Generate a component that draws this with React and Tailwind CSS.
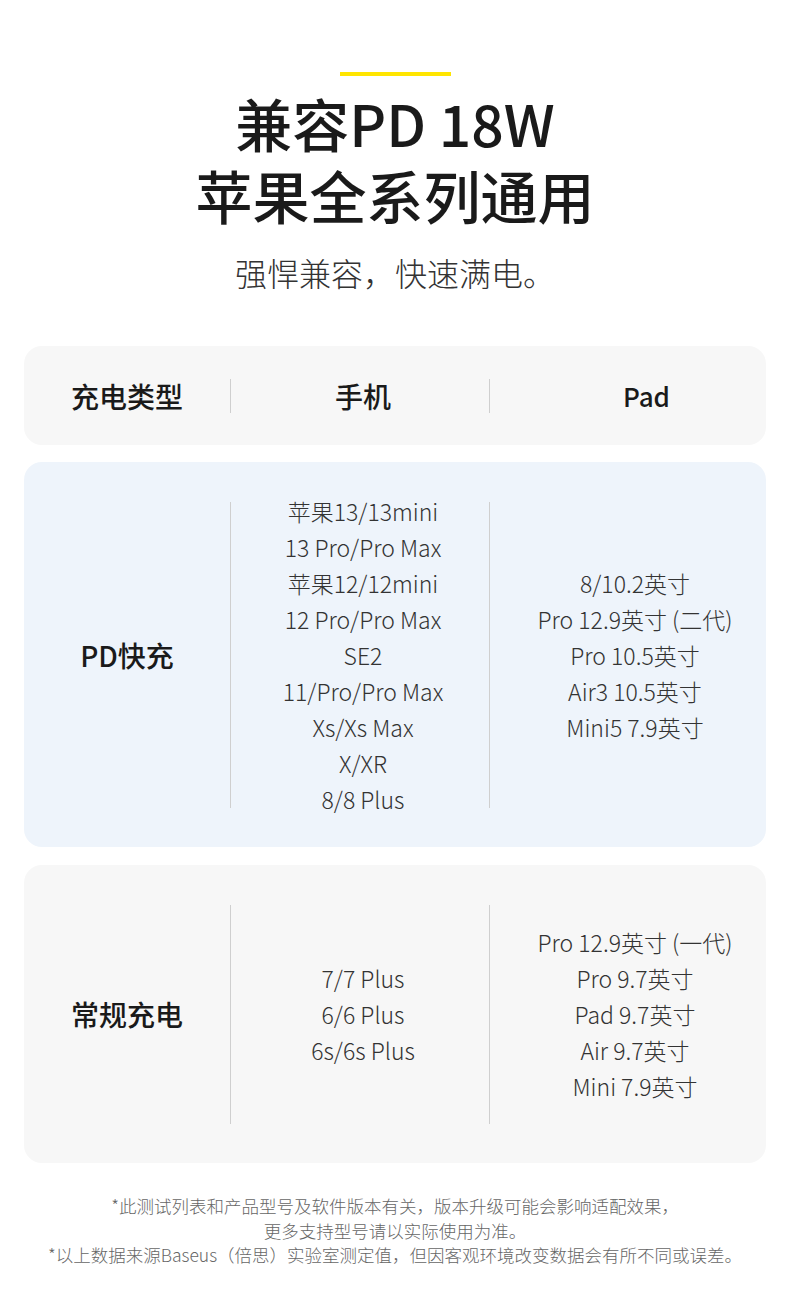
import React from 'react';

const FONT = { fontFamily: '"Noto Sans CJK SC", "Noto Sans", sans-serif' };

const pdPhones = [
  '苹果13/13mini',
  '13 Pro/Pro Max',
  '苹果12/12mini',
  '12 Pro/Pro Max',
  'SE2',
  '11/Pro/Pro Max',
  'Xs/Xs Max',
  'X/XR',
  '8/8 Plus',
];

const pdPads = ['8/10.2英寸', 'Pro 12.9英寸 (二代)', 'Pro 10.5英寸', 'Air3 10.5英寸', 'Mini5 7.9英寸'];

const normalPhones = ['7/7 Plus', '6/6 Plus', '6s/6s Plus'];

const normalPads = ['Pro 12.9英寸 (一代)', 'Pro 9.7英寸', 'Pad 9.7英寸', 'Air 9.7英寸', 'Mini 7.9英寸'];

// one column of device names, 36px per line
function ItemList({ items }) {
  return (
    <div className="flex flex-col items-center">
      {items.map((item) => (
        <div key={item} className="h-[36px] leading-[36px] text-[23px] font-light text-[#333] whitespace-nowrap">
          {item}
        </div>
      ))}
    </div>
  );
}

function Row({ label, phones, pads, bg, height, dividerHeight }) {
  return (
    <div
      className={`mx-[24px] rounded-[18px] ${bg} grid grid-cols-[206px_259px_1fr] items-center`}
      style={{ height }}
    >
      <div className="text-center text-[28px] font-medium text-[#1a1a1a]">{label}</div>
      <div className="relative flex items-center justify-center pl-[7px] h-full">
        <div
          className="absolute left-0 w-px bg-[#cfcfcf]"
          style={{ height: dividerHeight }}
        />
        <ItemList items={phones} />
      </div>
      <div className="relative flex items-center justify-center pl-[15px] h-full">
        <div
          className="absolute left-0 w-px bg-[#cfcfcf]"
          style={{ height: dividerHeight }}
        />
        <ItemList items={pads} />
      </div>
    </div>
  );
}

export default function App() {
  return (
    <div className="w-[790px] h-[1306px] bg-white overflow-hidden" style={FONT}>
      <div className="pt-[72px] flex flex-col items-center">
        <div className="w-[111px] h-[4px] bg-[#ffe500]" />
        <h1 className="mt-[10px] text-[57px] leading-[72px] font-medium text-[#1a1a1a] text-center">
          兼容PD 18W
          <br />
          苹果全系列通用
        </h1>
        <p className="mt-[21px] text-[32px] leading-[42px] font-light text-[#333]">强悍兼容，快速满电。</p>
      </div>

      <div className="mt-[53px] mx-[24px] h-[99px] rounded-[18px] bg-[#f7f7f7] grid grid-cols-[206px_259px_1fr] items-center">
        <div className="text-center text-[28px] font-medium text-[#1a1a1a]">充电类型</div>
        <div className="relative h-full flex items-center justify-center pl-[7px]">
          <div className="absolute left-0 w-px h-[34px] bg-[#cfcfcf]" />
          <span className="text-[28px] font-medium text-[#1a1a1a]">手机</span>
        </div>
        <div className="relative h-full flex items-center justify-center pl-[38px]">
          <div className="absolute left-0 w-px h-[34px] bg-[#cfcfcf]" />
          <span className="text-[26px] font-medium text-[#1a1a1a]">Pad</span>
        </div>
      </div>

      <div className="mt-[17px]">
        <Row label="PD快充" phones={pdPhones} pads={pdPads} bg="bg-[#eef4fb]" height={385} dividerHeight={306} />
      </div>

      <div className="mt-[18px]">
        <Row label="常规充电" phones={normalPhones} pads={normalPads} bg="bg-[#f7f7f7]" height={298} dividerHeight={219} />
      </div>

      <div className="mt-[31px] text-center text-[17.5px] leading-[24.5px] text-[#666] font-light">
        <p>*此测试列表和产品型号及软件版本有关，版本升级可能会影响适配效果，</p>
        <p>更多支持型号请以实际使用为准。</p>
        <p>*以上数据来源Baseus（倍思）实验室测定值，但因客观环境改变数据会有所不同或误差。</p>
      </div>
    </div>
  );
}
